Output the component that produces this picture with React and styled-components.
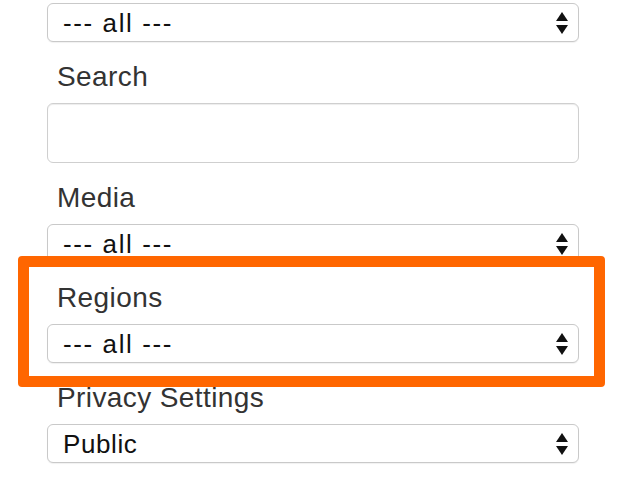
import React from "react";
import styled, { createGlobalStyle } from "styled-components";

const GlobalStyle = createGlobalStyle`
  body {
    margin: 0;
    background: #fff;
    font-family: "Liberation Sans", Arial, sans-serif;
  }
`;

const ALL = "--- all ---";

function SelectField({ value, options }) {
  return (
    <SelectWrap>
      <Select defaultValue={value} $wide={value === ALL}>
        {options.map((o) => (
          <option key={o}>{o}</option>
        ))}
      </Select>
      <Arrows width="12" height="22" viewBox="0 0 12 22">
        <path d="M0 9 L6 0 L12 9 Z" fill="#111" />
        <path d="M0 13 L12 13 L6 22 Z" fill="#111" />
      </Arrows>
    </SelectWrap>
  );
}

function App() {
  return (
    <>
      <GlobalStyle />
      <Form>
        <FormGroup>
          <SelectField value={ALL} options={[ALL]} />
        </FormGroup>
        <FormGroup>
          <Label>Search</Label>
          <TextInput type="text" />
        </FormGroup>
        <FormGroup>
          <Label>Media</Label>
          <SelectField value={ALL} options={[ALL]} />
        </FormGroup>
        <FormGroup $highlight>
          <Label>Regions</Label>
          <SelectField value={ALL} options={[ALL]} />
        </FormGroup>
        <FormGroup>
          <Label>Privacy Settings</Label>
          <SelectField value="Public" options={["Public", "Private"]} />
        </FormGroup>
      </Form>
    </>
  );
}

const Form = styled.form`
  width: 532px;
  padding: 3px 0 0 47px;
`;

const FormGroup = styled.div`
  position: relative;
  margin-bottom: 17px;

  ${({ $highlight }) =>
    $highlight &&
    `
    &::after {
      content: "";
      position: absolute;
      top: -24px;
      left: -29px;
      right: -26px;
      bottom: -24px;
      border: 11px solid #ff6600;
      border-radius: 4px;
      pointer-events: none;
      z-index: 2;
    }
  `}
`;

const Label = styled.label`
  display: block;
  padding-left: 10px;
  margin-bottom: 9px;
  font-size: 28px;
  line-height: 35px;
  letter-spacing: 0.4px;
  color: #333;
`;

const SelectWrap = styled.div`
  position: relative;
`;

const Select = styled.select`
  appearance: none;
  -webkit-appearance: none;
  display: block;
  width: 100%;
  height: 39px;
  margin: 0;
  padding: 0 40px 0 15px;
  border: 1px solid #c9c9c9;
  border-radius: 6px;
  background: #fff;
  font-family: "Liberation Sans", Arial, sans-serif;
  font-size: 26px;
  color: #111;
  letter-spacing: ${({ $wide }) => ($wide ? "1.6px" : "0.6px")};
  box-shadow: 0 1px 1px rgba(0, 0, 0, 0.06);
  outline: none;
`;

const Arrows = styled.svg`
  position: absolute;
  right: 11px;
  top: 50%;
  transform: translateY(-50%);
  pointer-events: none;
`;

const TextInput = styled.input`
  display: block;
  box-sizing: border-box;
  width: 100%;
  height: 60px;
  margin: 0;
  border: 1px solid #cfcfcf;
  border-radius: 6px;
  background: #fff;
  box-shadow: inset 0 1px 1px rgba(0, 0, 0, 0.075);
  outline: none;
`;

export default App;
